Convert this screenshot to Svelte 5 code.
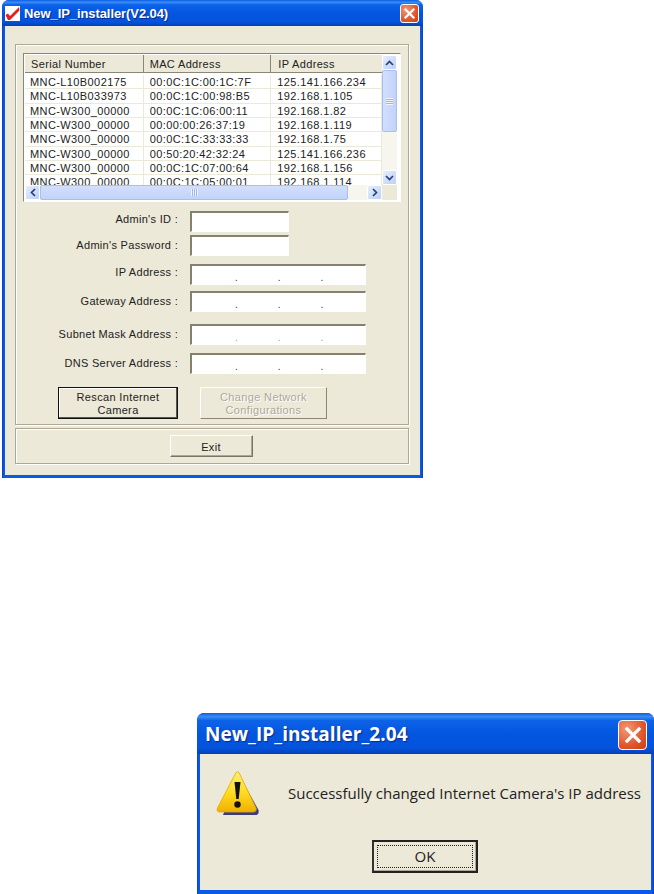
<script>
  const rows = [
    ['MNC-L10B002175', '00:0C:1C:00:1C:7F', '125.141.166.234'],
    ['MNC-L10B033973', '00:0C:1C:00:98:B5', '192.168.1.105'],
    ['MNC-W300_00000', '00:0C:1C:06:00:11', '192.168.1.82'],
    ['MNC-W300_00000', '00:00:00:26:37:19', '192.168.1.119'],
    ['MNC-W300_00000', '00:0C:1C:33:33:33', '192.168.1.75'],
    ['MNC-W300_00000', '00:50:20:42:32:24', '125.141.166.236'],
    ['MNC-W300_00000', '00:0C:1C:07:00:64', '192.168.1.156'],
    ['MNC-W300_00000', '00:0C:1C:05:00:01', '192.168.1.114']
  ];

  // top = gap above the row, lift = how far the label sits above the field's centre
  const fields = [
    { label: "Admin's ID :", short: true, top: 9, lift: 3 },
    { label: "Admin's Password :", short: true, top: 3, lift: 1 },
    { label: 'IP Address :', top: 8, lift: 3 },
    { label: 'Gateway Address :', top: 6, lift: 1 },
    { label: 'Subnet Mask Address :', top: 12, lift: 1 },
    { label: 'DNS Server Address :', top: 8, lift: 1 }
  ];
</script>

<div class="page">
  <div class="window main">
    <div class="titlebar">
      <svg class="app-icon" width="15" height="15" viewBox="0 0 15 15">
        <rect width="15" height="15" fill="#fff" />
        <path d="M0.5 9 L3 7.5 L5 10 L14 1 L14.5 4.5 L5 14 L3 14 Z" fill="#e8201c" />
      </svg>
      <span class="title">New_IP_installer(V2.04)</span>
      <button class="close small" aria-label="Close">
        <svg width="13" height="13" viewBox="0 0 13 13"><path d="M2.5 2.5 L10.5 10.5 M10.5 2.5 L2.5 10.5" stroke="#fff" stroke-width="2.2" stroke-linecap="square" /></svg>
      </button>
    </div>

    <div class="body">
      <div class="group top-group">
        <div class="list">
          <div class="inner">
            <div class="table">
              <div class="head">
                <div class="th c1">Serial Number</div>
                <div class="th c2">MAC Address</div>
                <div class="th c3">IP Address</div>
              </div>
              <div class="tbody">
                {#each rows as row}
                  <div class="row">
                    <div class="td c1 first">{row[0]}</div>
                    <div class="td c2">{row[1]}</div>
                    <div class="td c3">{row[2]}</div>
                  </div>
                {/each}
              </div>
            </div>
            <div class="vscroll">
              <div class="sb-btn">
                <svg width="9" height="6" viewBox="0 0 9 6"><path d="M1 5 L4.5 1.5 L8 5" fill="none" stroke="#2a3f7a" stroke-width="1.7" /></svg>
              </div>
              <div class="thumb-v"><span class="grip-v"></span></div>
              <div class="spacer"></div>
              <div class="sb-btn">
                <svg width="9" height="6" viewBox="0 0 9 6"><path d="M1 1 L4.5 4.5 L8 1" fill="none" stroke="#2a3f7a" stroke-width="1.7" /></svg>
              </div>
            </div>
          </div>
          <div class="hscroll">
            <div class="sb-btn">
              <svg width="6" height="9" viewBox="0 0 6 9"><path d="M5 1 L1.5 4.5 L5 8" fill="none" stroke="#2a3f7a" stroke-width="1.7" /></svg>
            </div>
            <div class="thumb-h"><span class="grip-h"></span></div>
            <div class="spacer"></div>
            <div class="sb-btn">
              <svg width="6" height="9" viewBox="0 0 6 9"><path d="M1 1 L4.5 4.5 L1 8" fill="none" stroke="#2a3f7a" stroke-width="1.7" /></svg>
            </div>
            <div class="corner"></div>
          </div>
        </div>

        <div class="form">
          {#each fields as f}
            <div class="field" style="margin-top: {f.top}px">
              <span class="label" style="margin-bottom: {f.lift * 2}px">{f.label}</span>
              <div class="input" class:short={f.short} class:faint={f.label.startsWith('Subnet')}>
                {#if !f.short}
                  <span>.</span><span>.</span><span>.</span>
                {/if}
              </div>
            </div>
          {/each}
        </div>

        <div class="actions">
          <button class="btn rescan">Rescan Internet<br />Camera</button>
          <button class="btn change" disabled>Change Network<br />Configurations</button>
        </div>
      </div>

      <div class="group bottom-group">
        <button class="btn exit">Exit</button>
      </div>
    </div>
  </div>

  <div class="window dialog">
    <div class="titlebar">
      <span class="title">New_IP_installer_2.04</span>
      <button class="close big" aria-label="Close">
        <svg width="20" height="20" viewBox="0 0 20 20"><path d="M4 4 L16 16 M16 4 L4 16" stroke="#fff" stroke-width="3.2" stroke-linecap="square" /></svg>
      </button>
    </div>
    <div class="body">
      <div class="message">
        <svg class="warn" width="44" height="46" viewBox="0 0 44 46">
          <defs>
            <linearGradient id="y" x1="0" y1="0" x2="0" y2="1">
              <stop offset="0" stop-color="#fff06a" />
              <stop offset="0.55" stop-color="#ffd91e" />
              <stop offset="1" stop-color="#efb000" />
            </linearGradient>
          </defs>
          <path d="M23 4 L42.5 39 Q43.5 44 39 44 L7 44 Z" fill="#3c3c80" />
          <path d="M20 1.5 Q21.5 0 23 1.5 L40 37 Q41 41 37 41 L4 41 Q0 41 1.5 37 Z" fill="url(#y)" stroke="#e0aa00" stroke-width="0.8" />
          <path d="M18.5 11 L24.5 11 L22.7 28 L20.3 28 Z" fill="#111" />
          <circle cx="21.5" cy="33.5" r="3.2" fill="#111" />
        </svg>
        <p>Successfully changed Internet Camera's IP address</p>
      </div>
      <div class="ok-row">
        <button class="ok"><span>OK</span></button>
      </div>
    </div>
  </div>
</div>

<style>
  :global(body) {
    margin: 0;
    background: #fff;
  }

  .page {
    width: 654px;
    height: 894px;
    overflow: hidden;
    font-family: "Liberation Sans", Arial, sans-serif;
    color: #111;
  }

  .window {
    box-sizing: border-box;
    display: flex;
    flex-direction: column;
    background: linear-gradient(90deg, #0a3fc8 0, #0a5ae8 2px, #0a5ae8 calc(100% - 2px), #0a3cb8 100%);
    border-radius: 7px 7px 0 0;
  }

  .main {
    width: 421px;
    height: 478px;
    margin-left: 2px;
  }

  .dialog {
    width: 457px;
    height: 181px;
    margin: 235px 0 0 197px;
  }

  .titlebar {
    display: flex;
    align-items: center;
    flex-shrink: 0;
    color: #fff;
    border-radius: 7px 7px 0 0;
    background: linear-gradient(#0a5ee6 0%, #3a8cf5 9%, #0d63e8 18%, #0356e0 50%, #0453dc 85%, #0340b8 100%);
  }

  .main .titlebar {
    height: 26px;
    padding: 0 4px 0 3px;
  }

  .main .title {
    font: bold 13px "Liberation Sans", sans-serif;
    letter-spacing: -0.08px;
    margin-left: 4px;
    text-shadow: 1px 1px 0 #0a2a90;
  }

  .dialog .titlebar {
    height: 41px;
    padding: 0 7px 0 8px;
  }

  .dialog .title {
    font: bold 19px "Open Sans", sans-serif;
    letter-spacing: 0.05px;
    text-shadow: 1px 1px 1px #0a2a90;
  }

  .close {
    margin-left: auto;
    padding: 0;
    display: flex;
    align-items: center;
    justify-content: center;
    border: 1px solid #fff;
    background: radial-gradient(circle at 30% 30%, #f09a78, #e0562c 60%, #c8401a);
  }

  .close.small {
    width: 19px;
    height: 19px;
    border-radius: 3px;
  }

  .close.big {
    width: 29px;
    height: 30px;
    margin-top: 3px;
    border-radius: 4px;
  }

  .body {
    flex: 1;
    display: flex;
    flex-direction: column;
    background: #ece9d8;
  }

  .main .body {
    margin: 0 3px 3px;
    padding: 18px 10px 0;
  }

  .dialog .body {
    margin: 0 3px 4px;
  }

  .group {
    box-sizing: border-box;
    width: 394px;
    border: 1px solid #aca899;
    box-shadow: inset 1px 1px 0 #fff, 1px 1px 0 #fff;
  }

  .top-group {
    height: 381px;
    padding: 8px 7px 0;
  }

  .bottom-group {
    height: 36px;
    margin-top: 3px;
    display: flex;
    justify-content: center;
    padding: 6px 2px 0 0;
  }

  .list {
    box-sizing: border-box;
    width: 378px;
    height: 149px;
    background: #fff;
    border: 1px solid;
    border-color: #8a8778 #fff #fff #8a8778;
    padding: 1px 3px 2px 1px;
  }

  .inner {
    display: flex;
    height: 130px;
  }

  .table {
    width: 358px;
    overflow: hidden;
  }

  .head {
    display: flex;
    height: 17px;
    background: #ece9d8;
    border-bottom: 1px solid #8a8778;
  }

  .th {
    font-size: 11px;
    line-height: 18px;
    letter-spacing: 0.35px;
    padding-left: 6px;
    box-sizing: border-box;
    border-right: 1px solid #8a8778;
    color: #222;
  }

  .c1 { width: 119px; }
  .c2 { width: 128px; }
  .c3 { width: 111px; border-right: none; padding-left: 7px; }

  .tbody {
    padding-top: 2px;
  }

  .row {
    display: flex;
    height: 14.33px;
    box-shadow: inset 0 -1px 0 #ece9d8;
  }

  .td {
    box-sizing: border-box;
    font-size: 11px;
    line-height: 14px;
    letter-spacing: 0.4px;
    padding-left: 6px;
    white-space: nowrap;
    border-right: 1px solid #ece9d8;
    color: #222;
  }

  .td.first {
    padding-left: 5px;
  }

  .vscroll {
    width: 15px;
    display: flex;
    flex-direction: column;
    background: #f6f5ee;
  }

  .sb-btn {
    box-sizing: border-box;
    width: 15px;
    height: 15px;
    flex-shrink: 0;
    display: flex;
    align-items: center;
    justify-content: center;
    border: 1px solid #fff;
    border-radius: 2px;
    background: linear-gradient(135deg, #e6eefd, #bccff7);
  }

  .thumb-v {
    height: 62px;
    flex-shrink: 0;
    box-sizing: border-box;
    display: flex;
    align-items: center;
    justify-content: center;
    border: 1px solid #a8bdf0;
    border-radius: 2px;
    background: linear-gradient(90deg, #d2dffc, #c2d3f9);
  }

  .grip-v {
    width: 7px;
    height: 7px;
    background: repeating-linear-gradient(#eef3fe 0 1px, #9db5ea 1px 2px);
  }

  .spacer {
    flex: 1;
  }

  .hscroll {
    display: flex;
    height: 15px;
    background: #f6f5ee;
  }

  .thumb-h {
    flex: 0 0 308px;
    box-sizing: border-box;
    display: flex;
    align-items: center;
    justify-content: center;
    border: 1px solid #a8bdf0;
    border-radius: 2px;
    background: linear-gradient(#d2dffc, #c2d3f9);
  }

  .grip-h {
    width: 7px;
    height: 7px;
    background: repeating-linear-gradient(90deg, #eef3fe 0 1px, #9db5ea 1px 2px);
  }

  .corner {
    width: 15px;
    flex-shrink: 0;
    background: #ece9d8;
  }

  .form {
    display: flex;
    flex-direction: column;
  }

  .field {
    display: flex;
    align-items: center;
  }

  .label {
    width: 155px;
    margin-right: 12px;
    text-align: right;
    font-size: 11px;
    letter-spacing: 0.3px;
    color: #222;
    flex-shrink: 0;
  }

  .input {
    box-sizing: border-box;
    width: 176px;
    height: 21px;
    background: #fff;
    border-style: solid;
    border-width: 2px 1px 1px 2px;
    border-color: #84826f #fff #fff #84826f;
    display: flex;
    padding-left: 43px;
    gap: 40px;
    font-size: 10px;
    line-height: 23px;
    color: #333;
  }

  .input.short {
    width: 99px;
  }

  .input.faint {
    color: #999;
  }

  .actions {
    display: flex;
    margin-top: 13px;
    margin-left: 35px;
    gap: 22px;
  }

  .btn {
    box-sizing: border-box;
    font-family: "Liberation Sans", sans-serif;
    font-size: 11px;
    line-height: 13px;
    letter-spacing: 0.35px;
    color: #222;
    background: #ece9d8;
    padding: 2px 0 0;
  }

  .rescan {
    width: 120px;
    height: 32px;
    border: 1px solid #111;
    box-shadow: inset -1px -1px 0 #555, inset 1px 1px 0 #fff;
  }

  .change {
    width: 127px;
    height: 32px;
    border: 1px solid;
    border-color: #fff #8a8778 #8a8778 #fff;
    color: #aca899;
    text-shadow: 1px 1px 0 #fff;
  }

  .exit {
    width: 83px;
    height: 22px;
    border: 1px solid;
    border-color: #fff #77756a #77756a #fff;
    box-shadow: inset -1px -1px 0 #aca899;
  }

  .message {
    display: flex;
    align-items: flex-start;
    padding: 17px 0 0 16px;
  }

  .message p {
    margin: 0 0 0 28px;
    padding-top: 12px;
    font: 15px "Open Sans", sans-serif;
    color: #222;
    white-space: nowrap;
  }

  .ok-row {
    display: flex;
    margin: 23px 0 0 172px;
  }

  .ok {
    box-sizing: border-box;
    width: 106px;
    height: 33px;
    padding: 3px;
    border: 2px solid #222;
    border-left-color: #333;
    background: #ece9d8;
    font: 15px "Open Sans", sans-serif;
    color: #222;
    box-shadow: inset -1px -1px 0 #aca899;
  }

  .ok span {
    box-sizing: border-box;
    display: block;
    height: 100%;
    line-height: 21px;
    border: 1px dotted #222;
  }
</style>
